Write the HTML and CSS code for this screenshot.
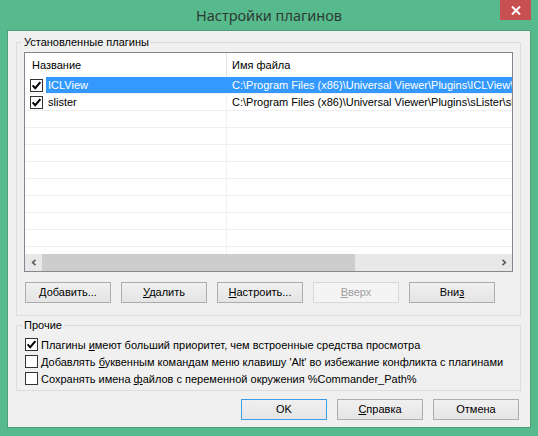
FILE: index.html
```html
<!DOCTYPE html>
<html lang="ru">
<head>
<meta charset="utf-8">
<title>Настройки плагинов</title>
<link rel="stylesheet" href="styles.css">
</head>
<body>
<div class="window">
  <div class="titlebar">
    <span class="tb-spacer"></span>
    <div class="title">Настройки плагинов</div>
    <div class="close">
      <svg width="10" height="9" viewBox="0 0 10 9"><path d="M1 0.5 L9 8.5 M9 0.5 L1 8.5" stroke="#fff" stroke-width="2" fill="none"/></svg>
    </div>
  </div>
  <div class="client">
    <fieldset class="group group-plugins">
      <legend>Установленные плагины</legend>
      <div class="list">
        <div class="list-head">
          <div class="c1">Название</div>
          <div class="c2">Имя файла</div>
        </div>
        <div class="list-body">
          <div class="row sel">
            <div class="c1"><span class="cb on"><svg width="11" height="11" viewBox="0 0 11 11"><path d="M1.6 5.4 L4.2 8.2 L9.4 2.2" stroke="#000" stroke-width="2" fill="none"/></svg></span><span class="name">ICLView</span></div>
            <div class="c2">C:\Program Files (x86)\Universal Viewer\Plugins\ICLView\ICLView.wlx</div>
          </div>
          <div class="row">
            <div class="c1"><span class="cb on"><svg width="11" height="11" viewBox="0 0 11 11"><path d="M1.6 5.4 L4.2 8.2 L9.4 2.2" stroke="#000" stroke-width="2" fill="none"/></svg></span><span class="name">slister</span></div>
            <div class="c2">C:\Program Files (x86)\Universal Viewer\Plugins\sLister\slister.wlx</div>
          </div>
          <div class="row"><div class="c1"></div><div class="c2"></div></div>
          <div class="row"><div class="c1"></div><div class="c2"></div></div>
          <div class="row"><div class="c1"></div><div class="c2"></div></div>
          <div class="row"><div class="c1"></div><div class="c2"></div></div>
          <div class="row"><div class="c1"></div><div class="c2"></div></div>
          <div class="row"><div class="c1"></div><div class="c2"></div></div>
          <div class="row"><div class="c1"></div><div class="c2"></div></div>
          <div class="row"><div class="c1"></div><div class="c2"></div></div>
          <div class="row"><div class="c1"></div><div class="c2"></div></div>
        </div>
        <div class="hscroll">
          <div class="sb-btn"><svg width="6" height="7" viewBox="0 0 6 7"><path d="M4.5 0.8 L1.6 3.5 L4.5 6.2" stroke="#5a5a5a" stroke-width="1.6" fill="none"/></svg></div>
          <div class="sb-thumb"></div>
          <div class="sb-track"></div>
          <div class="sb-btn"><svg width="6" height="7" viewBox="0 0 6 7"><path d="M1.5 0.8 L4.4 3.5 L1.5 6.2" stroke="#5a5a5a" stroke-width="1.6" fill="none"/></svg></div>
        </div>
      </div>
      <div class="btn-row">
        <button class="btn"><u>Д</u>обавить...</button>
        <button class="btn"><u>У</u>далить</button>
        <button class="btn"><u>Н</u>астроить...</button>
        <button class="btn" disabled><u>В</u>верх</button>
        <button class="btn">Вни<u>з</u></button>
      </div>
    </fieldset>
    <fieldset class="group group-other">
      <legend>Прочие</legend>
      <label class="check"><span class="cb on"><svg width="11" height="11" viewBox="0 0 11 11"><path d="M1.6 5.4 L4.2 8.2 L9.4 2.2" stroke="#000" stroke-width="2" fill="none"/></svg></span><span>Плагины <u>и</u>меют больший приоритет, чем встроенные средства просмотра</span></label>
      <label class="check"><span class="cb"></span><span>Добавлять <u>б</u>уквенным командам меню клавишу 'Alt' во избежание конфликта с плагинами</span></label>
      <label class="check"><span class="cb"></span><span>Сохранять имена <u>ф</u>айлов с переменной окружения %Commander_Path%</span></label>
    </fieldset>
    <div class="dlg-buttons">
      <button class="btn default">OK</button>
      <button class="btn"><u>С</u>правка</button>
      <button class="btn">Отмена</button>
    </div>
  </div>
</div>
</body>
</html>
```

FILE: styles.css
```css
* { box-sizing: border-box; }
html, body { margin: 0; padding: 0; }
body {
  width: 538px;
  height: 436px;
  overflow: hidden;
  font-family: "Liberation Sans", Arial, sans-serif;
  font-size: 11px;
  color: #000;
}
.window {
  width: 538px;
  height: 436px;
  background: #57ba8c;
  display: flex;
  flex-direction: column;
}
.titlebar {
  height: 30px;
  display: grid;
  grid-template-columns: 1fr auto 1fr;
  align-items: start;
}
.title {
  font-family: "Noto Sans", "Open Sans", sans-serif;
  font-size: 14.5px;
  line-height: 30px;
  color: #2c3a33;
  padding-top: 0;
}
.close {
  justify-self: end;
  width: 31px;
  height: 20px;
  margin-right: 7px;
  background: #c75050;
  display: flex;
  align-items: center;
  justify-content: center;
}
.client {
  flex: 1;
  margin: 0 7px 8px 7px;
  border: 1px solid #4c9f79;
  background: #f0f0f0;
  padding: 4px 9px 0 8px;
}
.group {
  margin: 0;
  padding: 0 7px 12px 7px;
  border: 1px solid #dcdcdc;
  min-width: 0;
}
.group legend {
  padding: 0 2px;
  margin-left: -2px;
  line-height: 14px;
  height: 14px;
}
.list {
  margin-top: 3px;
  height: 220px;
  border: 1px solid #828790;
  background: #fff;
  display: flex;
  flex-direction: column;
  overflow: hidden;
}
.list-head {
  height: 24px;
  display: flex;
  align-items: center;
  flex: none;
}
.list-head .c1 {
  width: 202px;
  padding-left: 7px;
  border-right: 1px solid #e5e5e5;
  height: 24px;
  line-height: 24px;
}
.list-head .c2 {
  padding-left: 5px;
}
.list-body {
  height: 177px;
  flex: none;
  overflow: hidden;
}
.row {
  height: 17px;
  display: flex;
  border-bottom: 1px solid #f0f0f0;
}
.row .c1 {
  width: 202px;
  flex: none;
  display: flex;
  align-items: center;
  padding-left: 5px;
  border-right: 1px solid #f0f0f0;
}
.row .c2 {
  flex: 1;
  min-width: 0;
  white-space: nowrap;
  overflow: hidden;
  padding-left: 5px;
  line-height: 16px;
}
.row .name {
  flex: 1;
  height: 16px;
  line-height: 16px;
  padding-left: 2px;
  margin-left: 3px;
}
.row.sel .name,
.row.sel .c2 {
  background: #3399ff;
  color: #fff;
}
.row.sel .c1 { border-right-color: #3399ff; }
.cb {
  width: 13px;
  height: 13px;
  flex: none;
  border: 1px solid #333;
  background: #fff;
  display: flex;
  align-items: center;
  justify-content: center;
}
.hscroll {
  height: 17px;
  flex: none;
  display: flex;
  background: #e8e8e8;
}
.sb-btn {
  width: 17px;
  height: 17px;
  display: flex;
  align-items: center;
  justify-content: center;
}
.sb-thumb {
  width: 313px;
  height: 17px;
  background: #cdcdcd;
}
.sb-track { flex: 1; }
.btn-row {
  margin-top: 10px;
  margin-left: 1px;
  display: flex;
  gap: 10px;
}
.btn {
  width: 86px;
  height: 21px;
  padding: 0;
  border: 1px solid #acacac;
  background: linear-gradient(#f0f0f0, #e5e5e5);
  font-family: inherit;
  font-size: 11px;
  color: #000;
  line-height: 19px;
}
.btn:disabled {
  border-color: #d9d9d9;
  background: #f4f4f4;
  color: #a0a0a0;
}
.btn.default { border-color: #3c9de5; }
.group-other {
  margin-top: 2px;
  padding: 4px 7px 3px 7px;
}
.check {
  height: 17px;
  display: flex;
  align-items: center;
  gap: 3px;
  padding-left: 1px;
  white-space: nowrap;
}
.dlg-buttons {
  margin-top: 8px;
  margin-right: 2px;
  display: flex;
  justify-content: flex-end;
  gap: 10px;
}
```
